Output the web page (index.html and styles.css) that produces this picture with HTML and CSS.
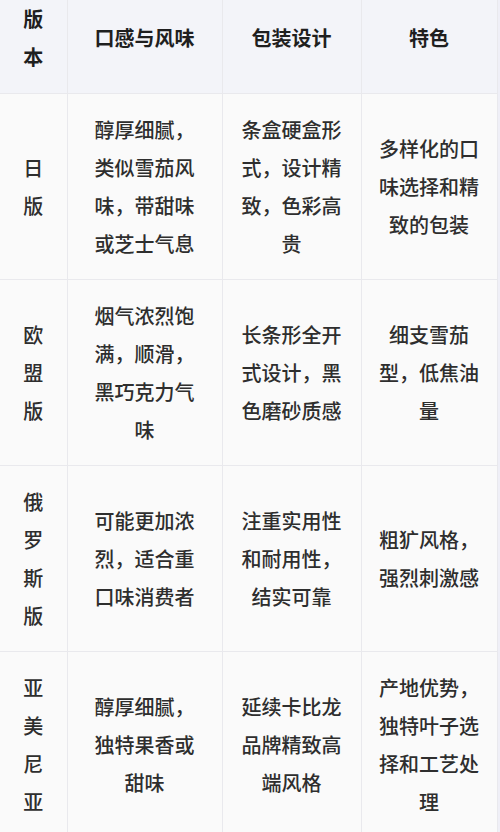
FILE: index.html
```html
<!DOCTYPE html>
<html lang="zh-CN">
<head>
<meta charset="utf-8">
<title>版本对比</title>
<link rel="stylesheet" href="styles.css">
</head>
<body>
<table class="grid">
  <colgroup>
    <col class="c1"><col class="c2"><col class="c3"><col class="c4">
  </colgroup>
  <thead>
    <tr>
      <th><div class="t1">版本</div></th>
      <th><div class="t5">口感与风味</div></th>
      <th><div class="t5">包装设计</div></th>
      <th><div class="t5">特色</div></th>
    </tr>
  </thead>
  <tbody>
    <tr>
      <td><div class="t1">日版</div></td>
      <td><div class="t5">醇厚细腻，类似雪茄风味，带甜味或芝士气息</div></td>
      <td><div class="t5">条盒硬盒形式，设计精致，色彩高贵</div></td>
      <td><div class="t5">多样化的口味选择和精致的包装</div></td>
    </tr>
    <tr>
      <td><div class="t1">欧盟版</div></td>
      <td><div class="t5">烟气浓烈饱满，顺滑，黑巧克力气味</div></td>
      <td><div class="t5">长条形全开式设计，黑色磨砂质感</div></td>
      <td><div class="t5">细支雪茄型，低焦油量</div></td>
    </tr>
    <tr>
      <td><div class="t1">俄罗斯版</div></td>
      <td><div class="t5">可能更加浓烈，适合重口味消费者</div></td>
      <td><div class="t5">注重实用性和耐用性，结实可靠</div></td>
      <td><div class="t5">粗犷风格，强烈刺激感</div></td>
    </tr>
    <tr>
      <td><div class="t1">亚美尼亚</div></td>
      <td><div class="t5">醇厚细腻，独特果香或甜味</div></td>
      <td><div class="t5">延续卡比龙品牌精致高端风格</div></td>
      <td><div class="t5">产地优势，独特叶子选择和工艺处理</div></td>
    </tr>
  </tbody>
</table>
</body>
</html>
```

FILE: styles.css
```css
html, body {
  margin: 0;
  padding: 0;
}
body {
  background: #efeff7;
  font-family: "Noto Sans CJK SC", "Noto Sans", sans-serif;
  color: #2e2e2e;
  overflow: hidden;
}
.grid {
  border-collapse: collapse;
  table-layout: fixed;
  width: 497px;
  margin-top: -18px;
  font-size: 20px;
  line-height: 38px;
}
.c1 { width: 67px; }
.c2 { width: 155px; }
.c3 { width: 139px; }
.c4 { width: 136px; }
.grid th,
.grid td {
  border: 1px solid #e9e9ed;
  padding: 17px 0;
  text-align: center;
  vertical-align: middle;
}
.grid td {
  padding: 16.5px 0;
}
.grid th {
  background: #f3f4f9;
  font-weight: 700;
  color: #1f1f1f;
}
.grid td {
  background: #fafafa;
  font-weight: 500;
}
.grid th:first-child,
.grid td:first-child {
  border-left: none;
}
.t1 {
  width: 1.1em;
  margin: 0 auto;
}
.t5 {
  width: 5.1em;
  margin: 0 auto;
}
```
